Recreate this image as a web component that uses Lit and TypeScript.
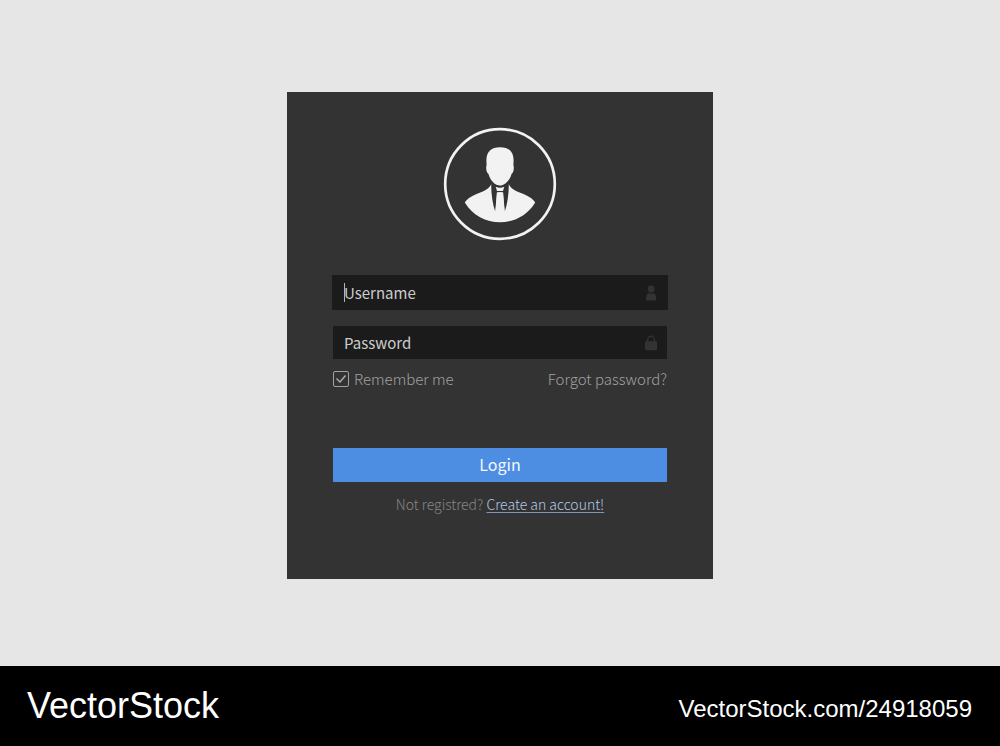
import { LitElement, html, css } from "lit";
import { customElement } from "lit/decorators.js";

@customElement("login-card")
export class LoginCard extends LitElement {
  static styles = css`
    :host {
      display: block;
      width: 100%;
      max-width: 426px;
      font-family: "Noto Sans CJK SC", "Noto Sans", sans-serif;
    }
    .card {
      box-sizing: border-box;
      display: flex;
      flex-direction: column;
      padding: 35px 46px 63px;
      background: #333333;
    }
    .avatar {
      display: block;
      width: 114px;
      height: 114px;
      margin: 0 auto 35px;
    }
    .fields {
      display: grid;
      gap: 17px;
    }
    .field {
      position: relative;
      display: flex;
      align-items: center;
      height: 33px;
      padding: 0 9px 0 11px;
      background: #1b1b1b;
    }
    .field.active {
      box-shadow: 0 0 0 1px #1b1b1b;
    }
    .caret {
      position: absolute;
      left: 11px;
      top: 7px;
      width: 1px;
      height: 19px;
      background: #b4b4b4;
    }
    .input {
      flex: 1;
      min-width: 0;
      height: 33px;
      box-sizing: border-box;
      padding: 0 0 1px;
      border: 0;
      outline: 0;
      background: none;
      color: #cdcdcd;
      font: 400 15px/24px "Noto Sans CJK SC", "Noto Sans", sans-serif;
    }
    .input::placeholder {
      color: #cdcdcd;
      opacity: 1;
    }
    .icon {
      width: 14px;
      height: 16px;
      fill: #333333;
    }
    .options {
      display: flex;
      justify-content: space-between;
      align-items: center;
      margin-top: 8px;
      font-size: 15px;
      font-weight: 300;
      line-height: 24px;
      color: #a0a0a0;
    }
    .remember {
      display: flex;
      align-items: center;
      gap: 5px;
    }
    .tick {
      display: grid;
      width: 16px;
      height: 16px;
    }
    .box,
    .check {
      grid-area: 1 / 1;
      width: 16px;
      height: 16px;
      margin: 0;
    }
    .box {
      appearance: none;
      box-sizing: border-box;
      border: 1px solid #a0a0a0;
      border-radius: 2px;
    }
    .check {
      pointer-events: none;
      visibility: hidden;
    }
    .box:checked + .check {
      visibility: visible;
    }
    .forgot {
      color: inherit;
      text-decoration: none;
    }
    .login {
      height: 34px;
      margin-top: 57px;
      padding: 0 0 3px;
      border: 0;
      background: #4d8ee2;
      color: #f5f8fd;
      font: 400 16px/24px "Noto Sans CJK SC", "Noto Sans", sans-serif;
    }
    .signup {
      margin: 10px 0 0;
      text-align: center;
      font-size: 14px;
      font-weight: 300;
      line-height: 24px;
      color: #868686;
    }
    .create {
      color: #b1c8e8;
      text-decoration: underline;
      text-decoration-color: #8397b4;
      text-decoration-thickness: 1px;
      text-decoration-skip-ink: none;
      text-underline-offset: 2px;
    }
  `;

  render() {
    return html`
      <form class="card" @submit=${(e: Event) => e.preventDefault()}>
        <svg class="avatar" viewBox="0 0 114 114" aria-hidden="true">
          <circle cx="57" cy="57" r="54.8" fill="none" stroke="#f2f2f2" stroke-width="2.7" />
          <g fill="#f2f2f2">
            <path d="M57 20.3C65.500 20.300 70.600 24.500 70.600 33.500L70.400 38.300C71.300 40.500 70.800 45.500 68.500 47C67 53.500 61.500 58.600 57 58.600C52.500 58.600 47 53.500 45.500 47C43.200 45.500 42.700 40.500 43.600 38.300L43.400 33.500C43.400 24.500 48.500 20.300 57 20.300Z" />
            <path d="M48.200 57C47 61.500 40.500 64.500 33.500 67C27.500 69.300 23.500 72.500 21.800 75.500C29.500 88.500 43 95.300 57 95.300C71 95.300 84.500 88.500 92.200 75.500C90.500 72.500 86.500 69.300 80.500 67C73.500 64.500 67 61.500 65.800 57C65.900 67 64.300 77 61.700 84.800L60.200 65.500L57 65.100L53.800 65.500L52.300 84.800C49.700 77 48.100 67 48.200 57Z" />
            <path d="M54.300 65.500H59.700L61.700 85L57 90L52.300 85Z" />
            <path d="M52.700 59.700Q57 61.800 61.300 59.700L60 63.900H54Z" />
          </g>
        </svg>

        <div class="fields">
          <div class="field active">
            <input class="input" type="text" name="username" placeholder="Username" aria-label="Username" />
            <span class="caret"></span>
            <svg class="icon" viewBox="0 0 14 16" aria-hidden="true">
              <circle cx="7.200" cy="4" r="3.400" />
              <path d="M2.200 15.500V13.500C2.200 10 3.700 8.400 5 8Q7.200 9.400 9.400 8C10.700 8.400 12.200 10 12.200 13.500V15.500Z" />
            </svg>
          </div>
          <div class="field">
            <input class="input" type="password" name="password" placeholder="Password" aria-label="Password" />
            <svg class="icon" viewBox="0 0 14 16" aria-hidden="true">
              <path d="M3.500 7V5A3.500 3.700 0 0 1 10.500 5V7" fill="none" stroke="#333333" stroke-width="1.400" />
              <rect x="1" y="6.300" width="12" height="9" rx="1.300" />
            </svg>
          </div>
        </div>

        <div class="options">
          <label class="remember">
            <span class="tick">
              <input class="box" type="checkbox" name="remember" checked />
              <svg class="check" viewBox="0 0 16 16" aria-hidden="true">
                <path d="M3.500 7.500L7 11L12.500 4.500" fill="none" stroke="#b0b0b0" stroke-width="1.400" />
              </svg>
            </span>
            Remember me
          </label>
          <a class="forgot" href="#forgot">Forgot password?</a>
        </div>

        <button class="login" type="submit">Login</button>
        <p class="signup">Not registred? <a class="create" href="#create">Create an account!</a></p>
      </form>
    `;
  }
}

@customElement("app-root")
export class AppRoot extends LitElement {
  static styles = css`
    :host {
      display: flex;
      flex-direction: column;
      min-height: 100vh;
      background: #e6e6e6;
    }
    .main {
      flex: 1;
      display: flex;
      justify-content: center;
      align-items: flex-start;
      padding: 92px 16px 64px;
    }
    .footer {
      display: flex;
      justify-content: space-between;
      align-items: center;
      height: 80px;
      padding: 0 28px 0 27px;
      background: #000000;
      color: #ffffff;
      font-family: "Liberation Sans", Arial, sans-serif;
    }
    .brand {
      font-size: 36px;
      line-height: 40px;
    }
    .source {
      padding-top: 6px;
      font-size: 24px;
      line-height: 28px;
    }
  `;

  render() {
    return html`
      <main class="main"><login-card></login-card></main>
      <footer class="footer">
        <span class="brand">VectorStock</span>
        <span class="source">VectorStock.com/24918059</span>
      </footer>
    `;
  }
}
